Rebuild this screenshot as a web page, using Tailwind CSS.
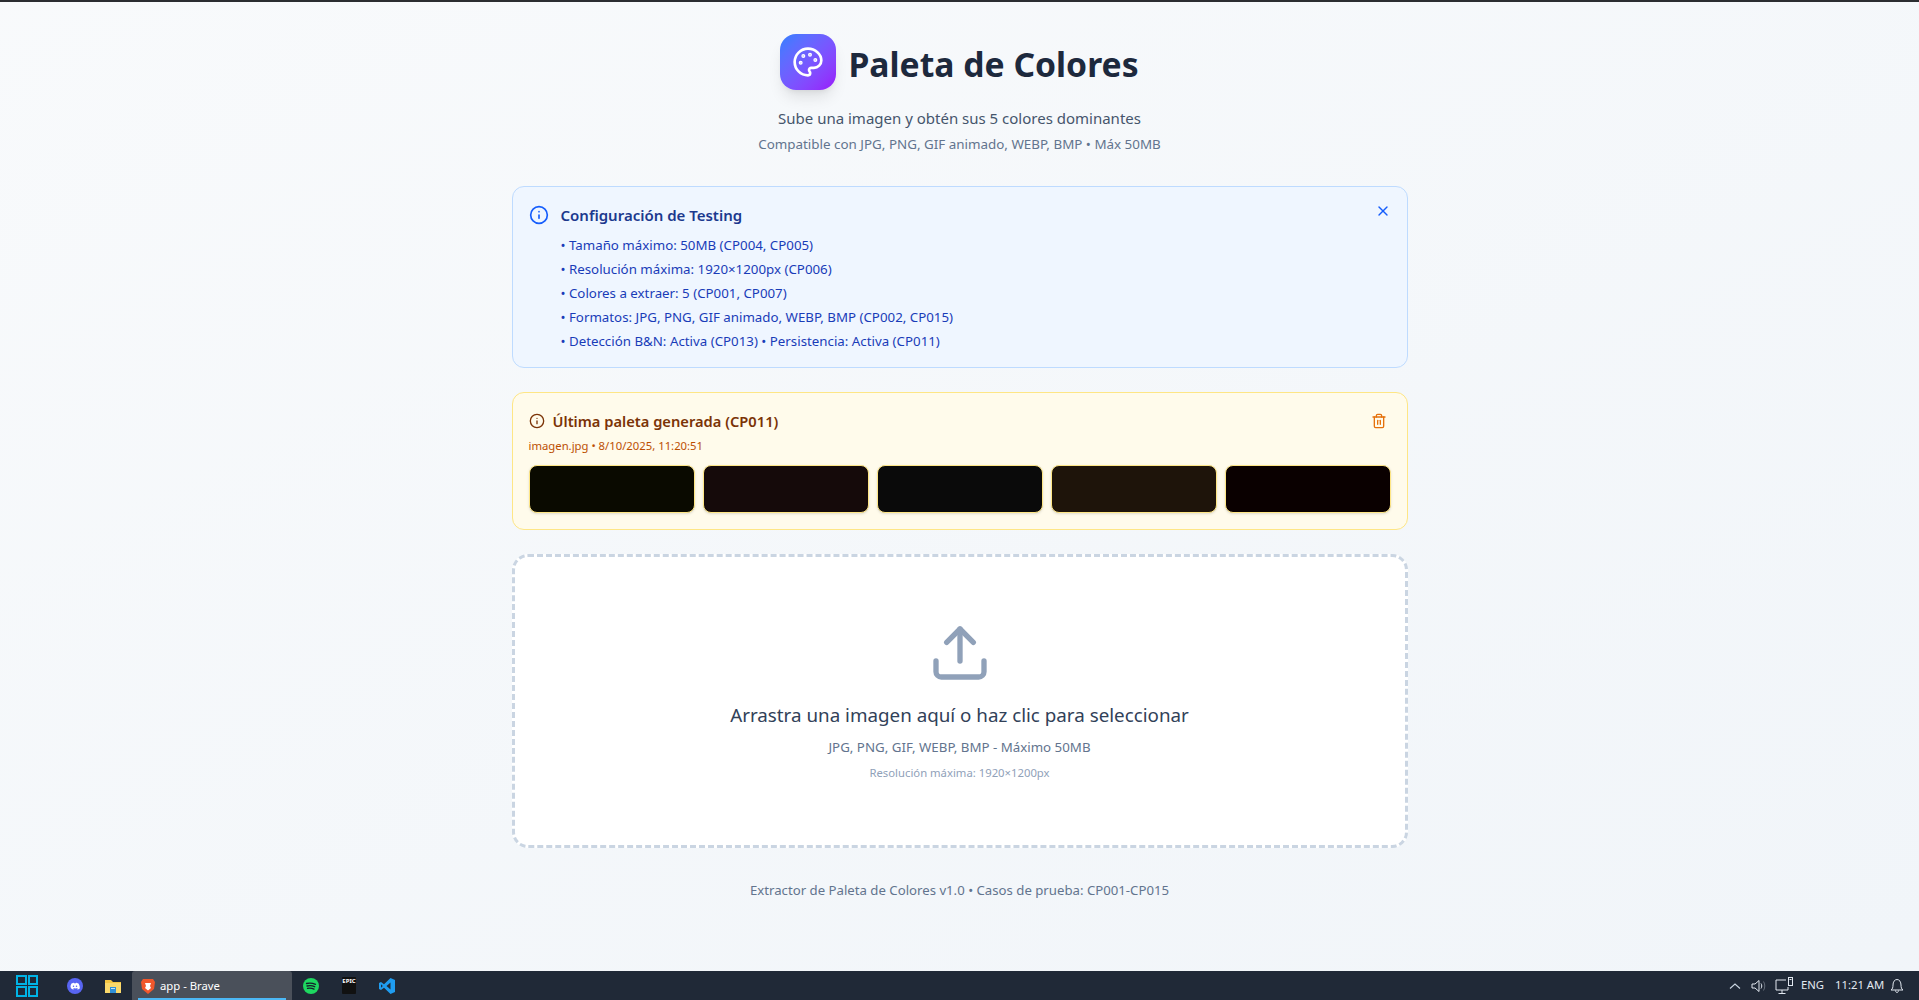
<!DOCTYPE html>
<html lang="es">
<head>
<meta charset="utf-8">
<title>Paleta de Colores</title>
<script src="https://cdn.jsdelivr.net/npm/@tailwindcss/browser@4"></script>
</head>
<body class="h-screen overflow-hidden flex flex-col font-['Noto_Sans','Open_Sans',sans-serif]">
<div class="h-[2px] shrink-0 bg-[#2b2d31]"></div>
<main class="flex-1 min-h-0 bg-linear-to-br from-slate-50 to-slate-100 pt-[32px]">
  <div class="w-[896px] mx-auto">
    <header class="flex flex-col items-center">
      <div class="flex items-center gap-3 h-[56px]">
        <div class="w-14 h-14 rounded-2xl bg-linear-to-br from-blue-500 to-purple-600 shadow-lg flex items-center justify-center text-white">
          <svg class="w-8 h-8" viewBox="0 0 24 24" fill="none" stroke="currentColor" stroke-width="2" stroke-linecap="round" stroke-linejoin="round"><circle cx="13.5" cy="6.5" r=".5" fill="currentColor"/><circle cx="17.5" cy="10.5" r=".5" fill="currentColor"/><circle cx="8.5" cy="7.5" r=".5" fill="currentColor"/><circle cx="6.5" cy="12.5" r=".5" fill="currentColor"/><path d="M12 2C6.5 2 2 6.5 2 12s4.5 10 10 10c.926 0 1.648-.746 1.648-1.688 0-.437-.18-.835-.437-1.125-.29-.289-.438-.652-.438-1.125a1.64 1.64 0 0 1 1.668-1.668h1.996c3.051 0 5.555-2.503 5.555-5.554C21.965 6.012 17.461 2 12 2z"/></svg>
        </div>
        <h1 class="mt-1 text-[33.7px] leading-10 font-bold text-slate-800">Paleta de Colores</h1>
      </div>
      <p class="mt-4 text-[15px] leading-6 text-slate-600">Sube una imagen y obtén sus 5 colores dominantes</p>
      <p class="mt-1 text-[13.4px] leading-5 text-slate-500">Compatible con JPG, PNG, GIF animado, WEBP, BMP • Máx 50MB</p>
    </header>

    <section class="relative mt-[32px] h-[182px] rounded-xl border border-blue-200 bg-blue-50 p-4 flex gap-3">
      <svg class="w-5 h-5 mt-[2px] shrink-0 text-blue-600" viewBox="0 0 24 24" fill="none" stroke="currentColor" stroke-width="2" stroke-linecap="round" stroke-linejoin="round"><circle cx="12" cy="12" r="10"/><path d="M12 16v-4"/><path d="M12 8h.01"/></svg>
      <div>
        <h2 class="text-[15px] leading-6 font-semibold text-blue-900">Configuración de Testing</h2>
        <ul class="mt-[5.5px] text-[13.3px] leading-6 text-blue-800">
          <li>• Tamaño máximo: 50MB (CP004, CP005)</li>
          <li>• Resolución máxima: 1920×1200px (CP006)</li>
          <li>• Colores a extraer: 5 (CP001, CP007)</li>
          <li>• Formatos: JPG, PNG, GIF animado, WEBP, BMP (CP002, CP015)</li>
          <li>• Detección B&amp;N: Activa (CP013) • Persistencia: Activa (CP011)</li>
        </ul>
      </div>
      <svg class="absolute top-4 right-4 w-4 h-4 text-blue-600" viewBox="0 0 24 24" fill="none" stroke="currentColor" stroke-width="2" stroke-linecap="round" stroke-linejoin="round"><path d="M18 6 6 18"/><path d="m6 6 12 12"/></svg>
    </section>

    <section class="mt-6 h-[138px] rounded-xl border border-amber-200 bg-amber-50 p-4">
      <div class="flex items-center justify-between h-6">
        <div class="flex items-center gap-2">
          <svg class="w-4 h-4 text-amber-900" viewBox="0 0 24 24" fill="none" stroke="currentColor" stroke-width="2" stroke-linecap="round" stroke-linejoin="round"><circle cx="12" cy="12" r="10"/><path d="M12 16v-4"/><path d="M12 8h.01"/></svg>
          <h3 class="text-[14.7px] font-semibold text-amber-900">Última paleta generada (CP011)</h3>
        </div>
        <svg class="w-4 h-4 mr-1 text-[#e5710c]" viewBox="0 0 24 24" fill="none" stroke="currentColor" stroke-width="2" stroke-linecap="round" stroke-linejoin="round"><path d="M3 6h18"/><path d="M19 6v14c0 1-1 2-2 2H7c-1 0-2-1-2-2V6"/><path d="M8 6V4c0-1 1-2 2-2h4c1 0 2 1 2 2v2"/><path d="M10 11v6"/><path d="M14 11v6"/></svg>
      </div>
      <p class="mt-[5px] text-[11.3px] leading-4 text-amber-700">imagen.jpg • 8/10/2025, 11:20:51</p>
      <div class="mt-[11px] grid grid-cols-5 gap-2">
        <div class="h-12 rounded-lg border border-amber-200 shadow-sm bg-[#0a0a00]"></div>
        <div class="h-12 rounded-lg border border-amber-200 shadow-sm bg-[#150a0a]"></div>
        <div class="h-12 rounded-lg border border-amber-200 shadow-sm bg-[#0a0a0a]"></div>
        <div class="h-12 rounded-lg border border-amber-200 shadow-sm bg-[#1e140a]"></div>
        <div class="h-12 rounded-lg border border-amber-200 shadow-sm bg-[#0a0000]"></div>
      </div>
    </section>

    <section class="mt-6 h-[294px] rounded-2xl border-[3px] border-dashed border-slate-300 bg-white flex flex-col items-center pt-16">
      <svg class="w-16 h-16 text-slate-400" viewBox="0 0 24 24" fill="none" stroke="currentColor" stroke-width="2" stroke-linecap="round" stroke-linejoin="round"><path d="M21 15v4a2 2 0 0 1-2 2H5a2 2 0 0 1-2-2v-4"/><polyline points="17 8 12 3 7 8"/><line x1="12" y1="3" x2="12" y2="15"/></svg>
      <p class="mt-4 text-[18.8px] leading-7 text-slate-700">Arrastra una imagen aquí o haz clic para seleccionar</p>
      <p class="mt-2 text-[13.3px] leading-5 text-slate-500">JPG, PNG, GIF, WEBP, BMP - Máximo 50MB</p>
      <p class="mt-2 text-[11.3px] leading-4 text-slate-400">Resolución máxima: 1920×1200px</p>
    </section>

    <p class="mt-8 text-center text-[13.2px] leading-5 text-slate-500">Extractor de Paleta de Colores v1.0 • Casos de prueba: CP001-CP015</p>
  </div>
</main>
<footer class="h-[29px] shrink-0 bg-[#202937] flex items-center text-white relative">
  <div class="pl-[16px] w-[59px] shrink-0">
    <div class="grid grid-cols-2 gap-[1px] w-[22px] h-[22px]">
      <div class="border-2 border-[#00b4e6]"></div><div class="border-2 border-[#00b4e6]"></div><div class="border-2 border-[#00b4e6]"></div><div class="border-2 border-[#00b4e6]"></div>
    </div>
  </div>
  <div class="w-[32px] flex justify-center shrink-0">
    <div class="w-4 h-4 rounded-full bg-[#5865f2] flex items-center justify-center">
      <svg class="w-3 h-3" viewBox="0 0 24 24" fill="#fff"><path d="M5 7c2-1 4-1.500 4.500-1.500L10 6.500c1.300-.2 2.700-.2 4 0l.5-1c.5 0 2.500.5 4.500 1.500 2 3 3 6.500 2.500 10-1.500 1.100-3 1.800-4.500 2l-1-1.500 2-1-.5-.5c-2.800 1.300-6.200 1.300-9 0l-.5.5 2 1-1 1.500c-1.500-.2-3-.9-4.500-2C2 13.500 3 10 5 7z"/><circle cx="9" cy="12.500" r="1.500" fill="#5865f2"/><circle cx="15" cy="12.500" r="1.500" fill="#5865f2"/></svg>
    </div>
  </div>
  <div class="w-[30px] ml-[7px] flex justify-center shrink-0">
    <svg class="w-4 h-4" viewBox="0 0 16 16"><path d="M0 2h6l2 2h8v11H0z" fill="#f5c542"/><path d="M0 5h16v10H0z" fill="#fbd96b"/><path d="M5 9h6v6H5z" fill="#2f8fd8"/><path d="M6 10h4v1H6z" fill="#bfe3f8"/></svg>
  </div>
  <div class="relative w-[160px] h-[29px] ml-[4px] shrink-0 bg-[#4a505a] rounded-t-[3px] flex items-center pl-[9px] gap-[5px]">
    <svg class="w-[14px] h-[16px]" viewBox="0 0 14 16"><path d="M2 1h10l2 3-1 7-6 5-6-5-1-7z" fill="#f1572b"/><path d="M4 5h6l-1 3 1 2-3 2.500L4 10l1-2z" fill="#fff"/></svg>
    <span class="text-[11.3px] leading-none">app - Brave</span>
    <div class="absolute bottom-0 left-[6px] right-[6px] h-[2px] bg-[#4cb8f5]"></div>
  </div>
  <div class="w-[38px] flex justify-center shrink-0">
    <svg class="w-4 h-4" viewBox="0 0 16 16"><circle cx="8" cy="8" r="8" fill="#1ed760"/><path d="M3.500 5.500c3-.8 6-.6 9 .8M4 8c2.600-.7 5.300-.5 7.700.7M4.500 10.400c2.200-.5 4.500-.3 6.500.7" fill="none" stroke="#14202a" stroke-width="1.300" stroke-linecap="round"/></svg>
  </div>
  <div class="w-[38px] flex justify-center shrink-0">
    <div class="w-[14px] h-[17px] bg-[#111] rounded-[1px] flex items-start justify-center text-[6px] leading-[9px] font-bold">EPIC</div>
  </div>
  <div class="w-[38px] flex justify-center shrink-0">
    <svg class="w-4 h-4" viewBox="0 0 16 16"><path d="M11.500 0 16 2v12l-4.500 2L5 9.700 2 12l-2-1V5l2-1 3 2.300z" fill="#1f9cf0"/><path d="M11.500 4.500 7.500 8l4 3.500z" fill="#202937"/><path d="M2 6.300v3.400L3.800 8z" fill="#202937"/></svg>
  </div>
  <div class="ml-auto flex items-center h-full pr-[15px]">
    <svg class="w-[12px] h-[12px] mr-[10px] text-slate-300" viewBox="0 0 12 12" fill="none" stroke="currentColor" stroke-width="1.100"><path d="M1 8.500 6 4l5 4.500"/></svg>
    <svg class="w-[17px] h-[14px] mr-[7px] text-slate-200" viewBox="0 0 17 14" fill="none" stroke="currentColor" stroke-width="1"><path d="M1 5h3l4-3.500v11L4 9H1z"/><path d="M10 4.500c1 1.500 1 3.500 0 5"/><path d="M12.500 2.500c1.700 2.700 1.700 6.300 0 9" stroke-opacity=".35"/></svg>
    <svg class="w-[19px] h-[18px] mr-[7px] text-slate-200" viewBox="0 0 19 18" fill="none" stroke="currentColor" stroke-width="1"><path d="M11 3H1v10h12v-3"/><path d="M7 13v3M3.500 16.500h7"/><rect x="13.500" y=".5" width="4" height="8"/><path d="M14.500 2.500h2"/></svg>
    <span class="w-[34px] text-[11.3px] text-slate-200">ENG</span>
    <span class="w-[55px] text-[11.3px] text-slate-200">11:21 AM</span>
    <svg class="w-[14px] h-[15px] text-slate-200" viewBox="0 0 14 15" fill="none" stroke="currentColor" stroke-width="1"><path d="M1 12c1.500-1 2-2.500 2-5 0-3 1.500-5.500 4-5.500S11 4 11 7c0 2.500.5 4 2 5z"/><path d="M5.500 12.500c0 1 .7 2 1.500 2s1.500-1 1.500-2"/></svg>
  </div>
</footer>
</body>
</html>
